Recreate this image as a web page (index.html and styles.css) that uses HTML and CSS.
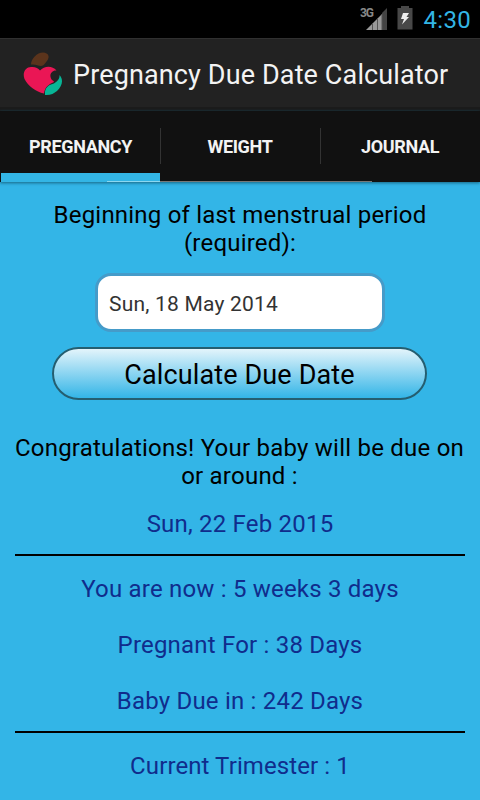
FILE: index.html
```html
<!DOCTYPE html>
<html lang="en">
<head>
  <meta charset="UTF-8">
  <title>Pregnancy Due Date Calculator</title>
  <link rel="stylesheet" href="styles.css">
</head>
<body>
  <div class="statusbar">
    <svg class="signal" width="30" height="26" viewBox="0 0 30 26">
      <path d="M6 24L22 8V24Z" fill="#999"/>
      <path d="M22 7L27 2V24H22Z" fill="#444"/>
      <path d="M12.5 17V24M17.5 12V24M22 8V24" stroke="#555"/>
      <text class="network" x="0" y="11" textLength="14">3G</text>
    </svg>
    <svg class="battery" width="16" height="24" viewBox="0 0 16 24">
      <path d="M4 0H12V2H15.500V23.500H.5V2H4Z" fill="#484848"/>
      <path d="M6 7H12L9.500 11H12L5 18.500L7 13H4Z" fill="#eee"/>
    </svg>
    <span class="clock">4:30</span>
  </div>

  <div class="titlebar">
    <svg class="logo" width="40" height="44" viewBox="0 0 40 44">
      <path d="M8 12.500C8 7 14 .5 20 .5C26 1 27 5 24 9C22 11 21 14 18 14C15 14 13 12 8 12.500Z" fill="#5b341c"/>
      <path d="M17 18.500C21 14 29 13 33.500 18.500C28 18 25.500 24 29 28C30 29 31 29 31 30C27 32 22 34 21 41.500C13 40 5 34 1.500 27C-1 20 3 15 8 15C12 14.500 15 16 17 18.500Z" fill="#ea1655"/>
      <path d="M36.500 23C41 28 39 34 34 39C31 41.500 27 43.500 22 43C21.500 37 24 34 28 32.500C32 31.500 37 28 36.500 23Z" fill="#08b596"/>
    </svg>
    <h1>Pregnancy Due Date Calculator</h1>
  </div>

  <div class="tabs">
    <div class="tab active">PREGNANCY</div>
    <div class="tab">WEIGHT</div>
    <div class="tab">JOURNAL</div>
    <div class="field-edge"></div>
  </div>

  <div class="content">
    <p class="prompt">Beginning of last menstrual period (required):</p>
    <input class="date" type="text" value="Sun, 18 May 2014">
    <button class="calculate">Calculate Due Date</button>
    <p class="congrats">Congratulations! Your baby will be due on or around :</p>
    <p class="result due">Sun, 22 Feb 2015</p>
    <div class="stats">
      <p class="result">You are now : 5 weeks 3 days</p>
      <p class="result">Pregnant For : 38 Days</p>
      <p class="result">Baby Due in : 242 Days</p>
    </div>
    <p class="result trimester">Current Trimester : 1</p>
  </div>
</body>
</html>
```

FILE: styles.css
```css
* {
  box-sizing: border-box;
}
body {
  font-family: Roboto, "Open Sans", sans-serif;
  background-color: #33b5e7;
  margin: 0;
  height: 800px;
  overflow: hidden;
}
.statusbar {
  height: 38px;
  background: #000;
  display: flex;
  justify-content: flex-end;
  align-items: center;
  padding-right: 9px;
}
.signal {
  margin-right: 7px;
}
.network {
  font-size: 12px;
  font-weight: bold;
  fill: #888;
}
.battery {
  margin: 0 11px 2px 0;
}
.clock {
  color: #33b5e5;
  font-size: 24px;
  letter-spacing: 0.3px;
  padding-top: 2px;
}
.titlebar {
  height: 73px;
  background: #222;
  border-top: 1px solid #303030;
  border-bottom: 4px solid #1b1b1b;
  display: flex;
  align-items: center;
  padding-left: 23px;
}
.logo {
  margin-top: 1px;
}
h1 {
  color: #f3f3f3;
  font-size: 27px;
  font-weight: normal;
  letter-spacing: 0.13px;
  white-space: nowrap;
  margin: 0 0 0 10px;
  padding-top: 3px;
}
.tabs {
  position: relative;
  height: 71px;
  background: #111;
  display: grid;
  grid-template-columns: repeat(3, 160px);
  box-shadow: 0 1px 3px #176583;
}
.tab {
  color: #f3f3f3;
  font-size: 18px;
  font-weight: bold;
  letter-spacing: -0.35px;
  text-align: center;
  line-height: 71px;
  background: linear-gradient(#333, #333) left 17px / 1px 36px no-repeat;
}
.tab.active {
  background: none;
  box-shadow: inset 1px 0 #111, inset 0 -9px #33b5e5;
  padding-left: 1px;
}
.field-edge {
  position: absolute;
  left: 107px;
  bottom: 0;
  width: 265px;
  height: 1px;
  background: linear-gradient(90deg, #8bd7f0 53px, #777 53px);
}
.content {
  display: flex;
  flex-direction: column;
  align-items: center;
  padding: 19px 15px 0;
}
p {
  font-size: 24px;
  line-height: 28px;
  letter-spacing: 0.2px;
  text-align: center;
  margin: 0;
}
.prompt {
  width: 420px;
}
.date {
  width: 290px;
  height: 59px;
  margin-top: 16px;
  padding: 2px 11px 0;
  border: 3px solid #459bc9;
  border-radius: 16px;
  background: #fff;
  color: #333;
  font-family: inherit;
  font-size: 21px;
  letter-spacing: 0.2px;
}
.calculate {
  width: 375px;
  height: 53px;
  margin: 15px 1px 0 0;
  padding: 2px 0 0;
  border: 2px solid #255e70;
  border-radius: 27px;
  background: linear-gradient(#e3f4fb, #33b5e7);
  color: #000;
  font-family: inherit;
  font-size: 27px;
  letter-spacing: 0.13px;
}
.congrats {
  width: 460px;
  margin: 34px 1px 0 0;
  letter-spacing: 0.23px;
}
.result {
  color: #102c8c;
}
.due {
  margin-top: 20px;
}
.stats {
  width: 450px;
  margin-top: 16px;
  padding: 19px 0 16px;
  border-top: 2px solid #000;
  border-bottom: 2px solid #000;
  display: flex;
  flex-direction: column;
  gap: 28px;
}
.trimester {
  margin-top: 19px;
  letter-spacing: 0.1px;
}
```
